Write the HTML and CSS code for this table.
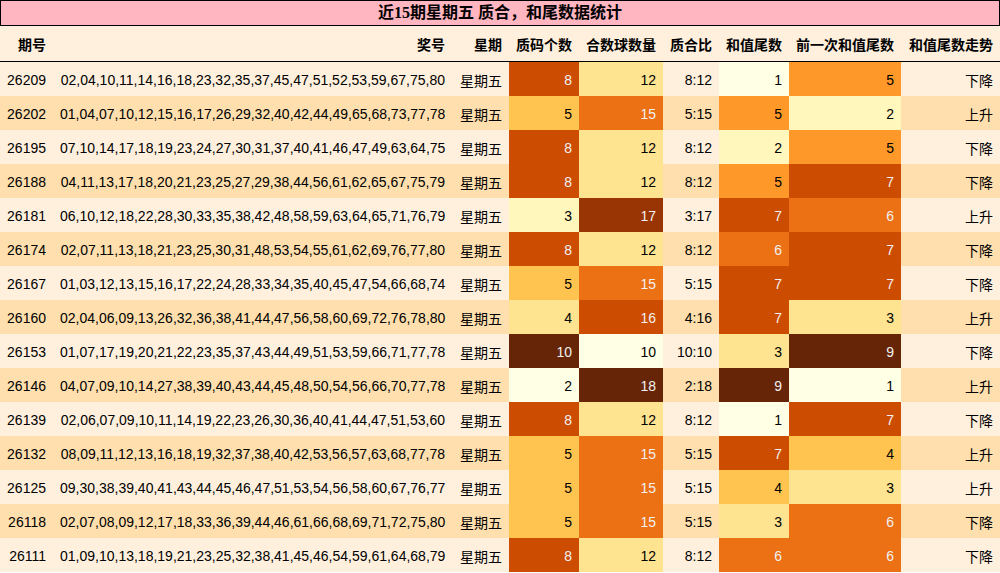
FILE: index.html
```html
<!DOCTYPE html>
<html lang="zh">
<head>
<meta charset="utf-8">
<title>近15期星期五 质合，和尾数据统计</title>
<link rel="stylesheet" href="styles.css">
</head>
<body>
<div class="title">近15期星期五 质合，和尾数据统计</div>
<table class="stats">
<colgroup>
<col class="w-issue"><col class="w-nums"><col class="w-day"><col class="w-prime"><col class="w-comp"><col class="w-ratio"><col class="w-tail"><col class="w-prev"><col class="w-trend">
</colgroup>
<thead>
<tr><th>期号</th><th>奖号</th><th>星期</th><th>质码个数</th><th>合数球数量</th><th>质合比</th><th>和值尾数</th><th>前一次和值尾数</th><th>和值尾数走势</th></tr>
</thead>
<tbody>
<tr><td>26209</td><td>02,04,10,11,14,16,18,23,32,35,37,45,47,51,52,53,59,67,75,80</td><td>星期五</td><td class="c6">8</td><td class="c2">12</td><td>8:12</td><td class="c0">1</td><td class="c4">5</td><td>下降</td></tr>
<tr><td>26202</td><td>01,04,07,10,12,15,16,17,26,29,32,40,42,44,49,65,68,73,77,78</td><td>星期五</td><td class="c3">5</td><td class="c5">15</td><td>5:15</td><td class="c4">5</td><td class="c1">2</td><td>上升</td></tr>
<tr><td>26195</td><td>07,10,14,17,18,19,23,24,27,30,31,37,40,41,46,47,49,63,64,75</td><td>星期五</td><td class="c6">8</td><td class="c2">12</td><td>8:12</td><td class="c1">2</td><td class="c4">5</td><td>下降</td></tr>
<tr><td>26188</td><td>04,11,13,17,18,20,21,23,25,27,29,38,44,56,61,62,65,67,75,79</td><td>星期五</td><td class="c6">8</td><td class="c2">12</td><td>8:12</td><td class="c4">5</td><td class="c6">7</td><td>下降</td></tr>
<tr><td>26181</td><td>06,10,12,18,22,28,30,33,35,38,42,48,58,59,63,64,65,71,76,79</td><td>星期五</td><td class="c1">3</td><td class="c7">17</td><td>3:17</td><td class="c6">7</td><td class="c5">6</td><td>上升</td></tr>
<tr><td>26174</td><td>02,07,11,13,18,21,23,25,30,31,48,53,54,55,61,62,69,76,77,80</td><td>星期五</td><td class="c6">8</td><td class="c2">12</td><td>8:12</td><td class="c5">6</td><td class="c6">7</td><td>下降</td></tr>
<tr><td>26167</td><td>01,03,12,13,15,16,17,22,24,28,33,34,35,40,45,47,54,66,68,74</td><td>星期五</td><td class="c3">5</td><td class="c5">15</td><td>5:15</td><td class="c6">7</td><td class="c6">7</td><td>下降</td></tr>
<tr><td>26160</td><td>02,04,06,09,13,26,32,36,38,41,44,47,56,58,60,69,72,76,78,80</td><td>星期五</td><td class="c2">4</td><td class="c6">16</td><td>4:16</td><td class="c6">7</td><td class="c2">3</td><td>上升</td></tr>
<tr><td>26153</td><td>01,07,17,19,20,21,22,23,35,37,43,44,49,51,53,59,66,71,77,78</td><td>星期五</td><td class="c8">10</td><td class="c0">10</td><td>10:10</td><td class="c2">3</td><td class="c8">9</td><td>下降</td></tr>
<tr><td>26146</td><td>04,07,09,10,14,27,38,39,40,43,44,45,48,50,54,56,66,70,77,78</td><td>星期五</td><td class="c0">2</td><td class="c8">18</td><td>2:18</td><td class="c8">9</td><td class="c0">1</td><td>上升</td></tr>
<tr><td>26139</td><td>02,06,07,09,10,11,14,19,22,23,26,30,36,40,41,44,47,51,53,60</td><td>星期五</td><td class="c6">8</td><td class="c2">12</td><td>8:12</td><td class="c0">1</td><td class="c6">7</td><td>下降</td></tr>
<tr><td>26132</td><td>08,09,11,12,13,16,18,19,32,37,38,40,42,53,56,57,63,68,77,78</td><td>星期五</td><td class="c3">5</td><td class="c5">15</td><td>5:15</td><td class="c6">7</td><td class="c3">4</td><td>上升</td></tr>
<tr><td>26125</td><td>09,30,38,39,40,41,43,44,45,46,47,51,53,54,56,58,60,67,76,77</td><td>星期五</td><td class="c3">5</td><td class="c5">15</td><td>5:15</td><td class="c3">4</td><td class="c2">3</td><td>上升</td></tr>
<tr><td>26118</td><td>02,07,08,09,12,17,18,33,36,39,44,46,61,66,68,69,71,72,75,80</td><td>星期五</td><td class="c3">5</td><td class="c5">15</td><td>5:15</td><td class="c2">3</td><td class="c5">6</td><td>下降</td></tr>
<tr><td>26111</td><td>01,09,10,13,18,19,21,23,25,32,38,41,45,46,54,59,61,64,68,79</td><td>星期五</td><td class="c6">8</td><td class="c2">12</td><td>8:12</td><td class="c5">6</td><td class="c5">6</td><td>下降</td></tr>
</tbody>
</table>
</body>
</html>
```
FILE: styles.css
```css
html, body {
  margin: 0;
  padding: 0;
  background: #ffffff;
}

body {
  width: 1000px;
  font-family: "Liberation Sans", Arial, "Noto Sans CJK SC", sans-serif;
  color: #000;
}

.title {
  box-sizing: border-box;
  height: 26px;
  border: 1px solid #000;
  background: #ffb6c1;
  font-family: "Liberation Serif", "Noto Sans CJK SC", serif;
  font-weight: bold;
  font-size: 16px;
  line-height: 24px;
  text-align: center;
}

.stats {
  width: 1000px;
  border-collapse: collapse;
  border-spacing: 0;
  table-layout: fixed;
  font-size: 14px;
}

.w-issue { width: 53px; }
.w-nums { width: 399px; }
.w-day { width: 57px; }
.w-prime { width: 70px; }
.w-comp { width: 84px; }
.w-ratio { width: 56px; }
.w-tail { width: 70px; }
.w-prev { width: 112px; }
.w-trend { width: 99px; }

.stats th,
.stats td {
  padding: 0 7px;
  text-align: right;
  white-space: nowrap;
  overflow: hidden;
}

.stats thead tr {
  background: #fff0de;
}

.stats th {
  height: 35px;
  font-weight: bold;
  border-bottom: 1px solid #000;
}

.stats td {
  height: 34px;
  padding-top: 2px;
  padding-bottom: 0;
  box-sizing: border-box;
}

.stats tbody tr:nth-child(odd) { background: #fff0de; }
.stats tbody tr:nth-child(even) { background: #ffdfad; }

.c0 { background: #ffffe5; color: #000; }
.c1 { background: #fff7bc; color: #000; }
.c2 { background: #fee391; color: #000; }
.c3 { background: #fec44f; color: #000; }
.c4 { background: #fe9929; color: #000; }
.c5 { background: #ec7014; color: #f1f1f1; }
.c6 { background: #cc4c02; color: #f1f1f1; }
.c7 { background: #993404; color: #f1f1f1; }
.c8 { background: #662506; color: #f1f1f1; }
```
